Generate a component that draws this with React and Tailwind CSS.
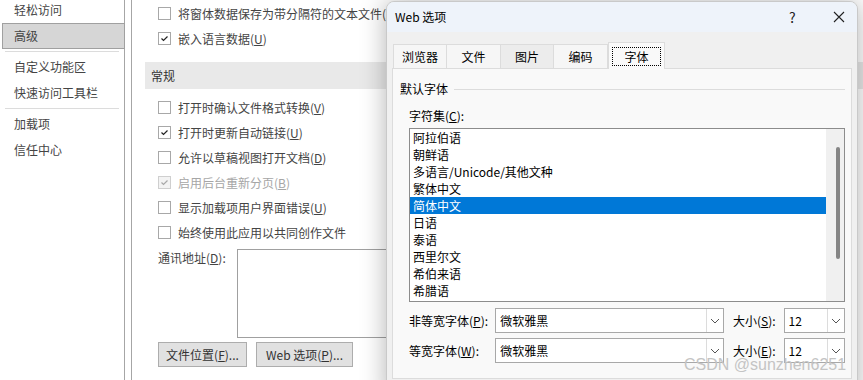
import React from 'react';

const navItems = [
  { label: '轻松访问' },
  { label: '高级', active: true },
  { sep: true },
  { label: '自定义功能区' },
  { label: '快速访问工具栏' },
  { sep: true },
  { label: '加载项' },
  { label: '信任中心' },
];

const charsets = [
  '阿拉伯语',
  '朝鲜语',
  '多语言/Unicode/其他文种',
  '繁体中文',
  '简体中文',
  '日语',
  '泰语',
  '西里尔文',
  '希伯来语',
  '希腊语',
];

function Check({ checked, disabled }) {
  return (
    <span
      className={`w-[13px] h-[13px] border flex items-center justify-center shrink-0 ${
        disabled ? 'border-[#cfcfcf] bg-[#f3f3f3]' : 'border-[#a8a8a8] bg-white'
      }`}
    >
      {checked && (
        <svg width="11" height="11" viewBox="0 0 11 11">
          <path
            d="M2.5 5.5 L4.5 7.5 L8.5 3.5"
            fill="none"
            stroke={disabled ? '#a8a8a8' : '#222'}
            strokeWidth="1.2"
          />
        </svg>
      )}
    </span>
  );
}

function Row({ checked, disabled, children }) {
  return (
    <div className="h-[25px] flex items-center pl-[26px] gap-[7px]">
      <Check checked={checked} disabled={disabled} />
      <span className={`whitespace-nowrap ${disabled ? 'text-[#a6a6a6]' : 'text-[#444]'}`}>{children}</span>
    </div>
  );
}

function Chevron() {
  return (
    <svg width="10" height="6" viewBox="0 0 10 6">
      <path d="M1 1 L5 5 L9 1" fill="none" stroke="#555" strokeWidth="1" />
    </svg>
  );
}

function Combo({ value, width }) {
  return (
    <div className={`${width} h-[25px] bg-white border border-[#a8a8a8] flex items-center`}>
      <span className="flex-1 pl-[4px] text-black">{value}</span>
      <span className="w-[17px] h-full border-l border-[#dcdcdc] flex items-center justify-center">
        <Chevron />
      </span>
    </div>
  );
}

function WebOptionsDialog() {
  const tabs = [
    { t: '浏览器', w: 'w-[54px]', bg: 'bg-[#f6f6f6]' },
    { t: '文件', w: 'w-[55px]', bg: 'bg-[#f6f6f6]' },
    { t: '图片', w: 'w-[54px]', bg: 'bg-[#ececec]' },
    { t: '编码', w: 'w-[55px]', bg: 'bg-[#f6f6f6]' },
  ];
  return (
    <div className="absolute left-[386px] top-[1px] w-[472px] h-[400px] rounded-t-[8px] border border-[#c9c9c9] bg-[#f0f0f0] shadow-[0_0_26px_rgba(0,0,0,0.3)] text-black overflow-hidden">
      <div className="h-[30px] bg-[#eef3fa] flex items-center pl-[8px]">
        <span className="flex-1">Web 选项</span>
        <span className="text-[14px] w-[10px] mr-[34px] text-[#222]">?</span>
        <svg width="12" height="12" viewBox="0 0 12 12" className="mr-[12px]">
          <path d="M1 1 L11 11 M11 1 L1 11" stroke="#222" strokeWidth="1.1" />
        </svg>
      </div>

      <div className="px-[5px] pt-[9px]">
        <div className="flex items-end h-[27px] pl-[1px]">
          {tabs.map((tab, i) => (
            <div
              key={tab.t}
              className={`h-[24px] ${tab.w} ${tab.bg} border border-b-0 border-[#dcdcdc] ${
                i === 0 ? '' : '-ml-px'
              } flex items-center justify-center`}
            >
              {tab.t}
            </div>
          ))}
          <div className="h-[27px] w-[57px] bg-[#f9f9f9] border border-b-0 border-[#dcdcdc] relative z-10 -mb-px flex items-center justify-center">
            <span className="border border-dotted border-black px-[11px] leading-[17px]">字体</span>
          </div>
        </div>

        <div className="h-[311px] bg-[#f9f9f9] border border-[#dcdcdc] pl-[7px] pr-[6px]">
          <div className="flex items-center gap-[6px] h-[20px] mt-[10px]">
            <span>默认字体</span>
            <span className="flex-1 h-px bg-[#dcdcdc]" />
          </div>
          <div className="pl-[9px]">
            <div className="h-[18px] mt-[8px] flex items-center">
              字符集(<u>C</u>):
            </div>
            <div className="mt-[3px] h-[174px] border border-[#8c8c8c] bg-white flex">
              <div className="flex-1">
                {charsets.map((c) => (
                  <div
                    key={c}
                    className={`h-[17px] leading-[17px] pl-[3px] whitespace-nowrap ${
                      c === '简体中文' ? 'bg-[#0078d7] text-white' : ''
                    }`}
                  >
                    {c}
                  </div>
                ))}
              </div>
              <div className="w-[18px] bg-[#f0f0f0] pt-[18px] flex justify-center">
                <div className="w-[4px] h-[112px] ml-[5px] rounded-full bg-[#858585]" />
              </div>
            </div>

            <div className="flex items-center mt-[6px] h-[25px]">
              <span className="w-[87px] whitespace-nowrap">非等宽字体(<u>P</u>):</span>
              <Combo value="微软雅黑" width="w-[231px]" />
              <span className="w-[60px] pl-[9px] whitespace-nowrap">大小(<u>S</u>):</span>
              <Combo value="12" width="w-[62px]" />
            </div>
            <div className="flex items-center mt-[5px] h-[25px]">
              <span className="w-[87px] whitespace-nowrap">等宽字体(<u>W</u>):</span>
              <Combo value="微软雅黑" width="w-[231px]" />
              <span className="w-[60px] pl-[9px] whitespace-nowrap">大小(<u>E</u>):</span>
              <Combo value="12" width="w-[62px]" />
            </div>
          </div>
        </div>
      </div>
    </div>
  );
}

export default function App() {
  return (
    <div className="relative w-[863px] h-[380px] overflow-hidden bg-white text-[12px] font-['Noto_Sans_CJK_SC','Microsoft_YaHei',sans-serif] text-[#444]">
      <div className="flex h-full">
        <nav className="w-[125px] shrink-0 border-r border-[#a6a6a6] -mt-[3px]">
          {navItems.map((item, i) =>
            item.sep ? (
              <div key={i} className="mx-[5px] my-[2px] h-px bg-[#dcdcdc]" />
            ) : (
              <div
                key={i}
                className={`h-[26px] flex items-center pl-[11px] ml-[2px] -mr-px ${
                  item.active ? 'bg-[#d6d6d6] border border-[#a0a0a0]' : 'border border-transparent'
                }`}
              >
                {item.label}
              </div>
            )
          )}
        </nav>

        <main className="ml-[6px] flex-1 border-l border-[#a6a6a6] pt-px">
          <Row>将窗体数据保存为带分隔符的文本文件(<u>A</u>)</Row>
          <Row checked>嵌入语言数据(<u>U</u>)</Row>

          <div className="mt-[11px] ml-[13px] h-[27px] bg-[#e9e9e9] flex items-center pl-[6px] text-[#333]">常规</div>

          <div className="mt-[6px]">
            <Row>打开时确认文件格式转换(<u>V</u>)</Row>
            <Row checked>打开时更新自动链接(<u>U</u>)</Row>
            <Row>允许以草稿视图打开文档(<u>D</u>)</Row>
            <Row checked disabled>启用后台重新分页(<u>B</u>)</Row>
            <Row>显示加载项用户界面错误(<u>U</u>)</Row>
            <Row>始终使用此应用以共同创作文件</Row>
          </div>

          <div className="flex mt-[4px] pl-[26px]">
            <span className="w-[79px] pt-[1px] leading-[16px]">通讯地址(<u>D</u>):</span>
            <div className="w-[240px] h-[89px] border border-[#a0a0a0] bg-white" />
          </div>

          <div className="flex gap-[9px] mt-[4px] pl-[26px]">
            <button className="w-[89px] h-[25px] bg-[#e1e1e1] border border-[#adadad] text-[#333]">
              文件位置(<u>F</u>)...
            </button>
            <button className="w-[97px] h-[25px] bg-[#e1e1e1] border border-[#adadad] text-[#333]">
              Web 选项(<u>P</u>)...
            </button>
          </div>
        </main>
      </div>

      <WebOptionsDialog />

      <div className="absolute left-[684px] top-[355px] text-[16px] leading-[20px] font-['Liberation_Sans',sans-serif] text-[#c4c4c4] pointer-events-none">
        CSDN @sunzhen6251
      </div>
    </div>
  );
}
